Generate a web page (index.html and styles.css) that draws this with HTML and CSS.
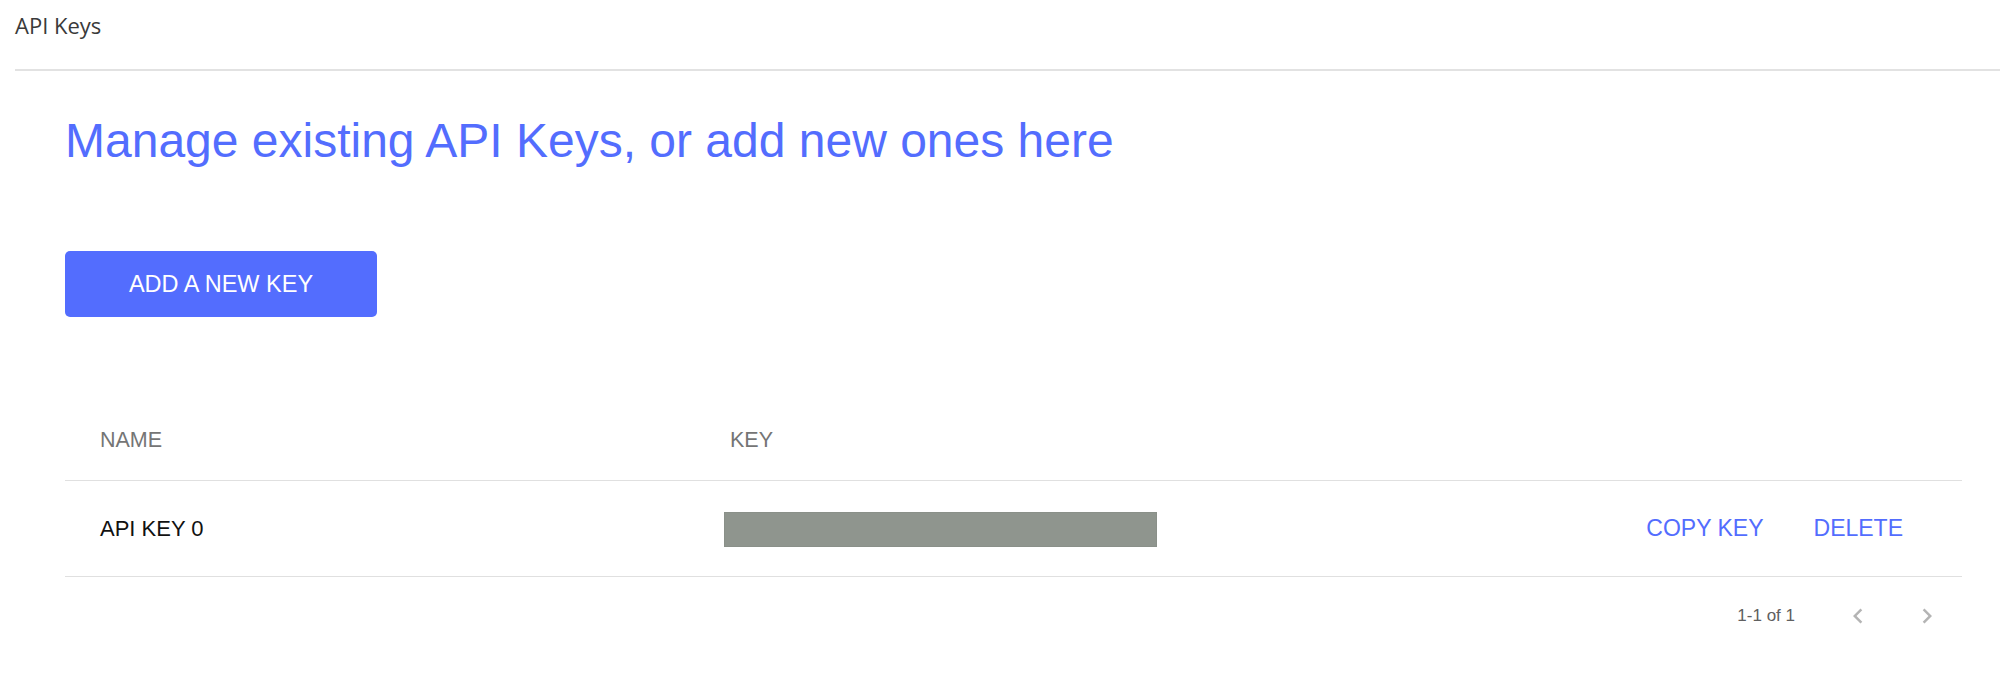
FILE: index.html
```html
<!DOCTYPE html>
<html lang="en">
<head>
<meta charset="utf-8">
<title>API Keys</title>
<link rel="stylesheet" href="styles.css">
</head>
<body>
  <header class="topbar">
    <span class="topbar-title">API Keys</span>
  </header>
  <main class="content">
    <h1 class="headline">Manage existing API Keys, or add new ones here</h1>
    <button class="btn-primary" type="button"><span class="btn-label">ADD A NEW KEY</span></button>
    <section class="keys-table">
      <div class="row row-head">
        <div class="cell cell-name">NAME</div>
        <div class="cell cell-key cell-key-head">KEY</div>
        <div class="cell cell-actions"></div>
      </div>
      <div class="row row-body">
        <div class="cell cell-name name-text">API KEY 0</div>
        <div class="cell cell-key"><span class="key-mask"></span></div>
        <div class="cell cell-actions">
          <a class="action">COPY KEY</a>
          <a class="action">DELETE</a>
        </div>
      </div>
      <div class="pagination">
        <span class="page-info">1-1 of 1</span>
        <span class="page-btn" aria-label="Previous page">
          <svg viewBox="0 0 24 24" width="30" height="30"><path d="M15.41 7.41L14 6l-6 6 6 6 1.41-1.41L10.83 12z"/></svg>
        </span>
        <span class="page-btn" aria-label="Next page">
          <svg viewBox="0 0 24 24" width="30" height="30"><path d="M10 6L8.59 7.41 13.17 12l-4.58 4.59L10 18l6-6z"/></svg>
        </span>
      </div>
    </section>
  </main>
</body>
</html>
```

FILE: styles.css
```css
html, body {
  margin: 0;
  padding: 0;
  background: #ffffff;
}

body {
  font-family: "Liberation Sans", Arial, Helvetica, sans-serif;
  color: #000;
}

.topbar {
  margin-left: 15px;
  height: 59px;
  padding-top: 10px;
  border-bottom: 2px solid #e2e2e2;
}

.topbar-title {
  font-family: "Open Sans", "Liberation Sans", sans-serif;
  font-size: 22px;
  line-height: 30px;
  color: #3a3a3a;
}

.content {
  padding: 0 38px 0 65px;
}

.headline {
  margin: 42px 0 0;
  font-size: 48px;
  line-height: 56px;
  font-weight: normal;
  color: #536dfe;
}

.btn-primary {
  display: flex;
  align-items: center;
  justify-content: center;
  margin-top: 82px;
  width: 312px;
  height: 66px;
  padding: 0;
  border: none;
  border-radius: 5px;
  background: #536dfe;
  cursor: pointer;
}

.btn-label {
  font: 23.5px/26px "Liberation Sans", Arial, sans-serif;
  color: #ffffff;
}

.keys-table {
  margin-top: 83px;
}

.row {
  display: grid;
  grid-template-columns: 659px 1fr auto;
  align-items: center;
  border-bottom: 1px solid #e0e0e0;
}

.row-head {
  height: 80px;
  font-size: 21.5px;
  color: #757575;
}

.row-body {
  height: 95px;
}

.cell-name {
  padding-left: 35px;
}

.cell-key-head {
  padding-left: 6px;
}

.name-text {
  font-size: 22px;
  color: #111;
}

.key-mask {
  display: block;
  width: 433px;
  height: 35px;
  margin-top: 2px;
  background: #8f958e;
  box-shadow: inset 0 0 0 1px #8a9089;
}

.cell-actions {
  display: flex;
  justify-content: flex-end;
  gap: 50px;
  padding-right: 59px;
}

.action {
  font-size: 23px;
  color: #536dfe;
  cursor: pointer;
}

.pagination {
  display: flex;
  justify-content: flex-end;
  align-items: center;
  height: 78px;
  padding-right: 20px;
}

.page-info {
  font-size: 17px;
  color: #606060;
  margin-right: 48px;
}

.page-btn {
  display: flex;
  width: 30px;
  height: 30px;
}

.page-btn + .page-btn {
  margin-left: 39px;
}

.page-btn svg {
  fill: #b4b4b4;
}
```
